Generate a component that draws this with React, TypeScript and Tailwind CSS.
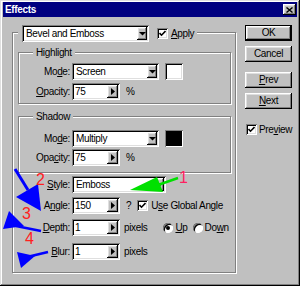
import type { ReactNode } from "react";

const sunken =
  "bg-white shadow-[inset_1px_1px_0_#808080,inset_-1px_-1px_0_#fff,inset_2px_2px_0_#000,inset_-2px_-2px_0_#dfdfdf]";
const raised =
  "bg-[#c0c0c0] shadow-[inset_-1px_-1px_0_#000,inset_1px_1px_0_#fff,inset_-2px_-2px_0_#808080,inset_2px_2px_0_#dfdfdf]";
const etched = "border border-[#808080] shadow-[inset_1px_1px_0_#fff,1px_1px_0_#fff]";

function Combo({ value, width }: { value: string; width: string }) {
  return (
    <div className={`${sunken} ${width} h-[17px] flex items-center`}>
      <span className="flex-1 pl-[4px] leading-none">{value}</span>
      <div className={`${raised} w-[10px] h-[13px] mr-[2px] flex items-center justify-center`}>
        <svg width="7" height="4" viewBox="0 0 7 4">
          <polygon points="0,0 7,0 3.5,3.5" fill="#000" />
        </svg>
      </div>
    </div>
  );
}

function Spin({ value }: { value: string }) {
  return (
    <div className={`${sunken} w-[48px] h-[17px] flex items-center`}>
      <span className="flex-1 pl-[3px] leading-none">{value}</span>
      <div className={`${raised} w-[11px] h-[13px] mr-[2px] flex items-center justify-center`}>
        <svg width="4" height="7" viewBox="0 0 4 7">
          <polygon points="0,0 4,3.5 0,7" fill="#000" />
        </svg>
      </div>
    </div>
  );
}

function Check() {
  return (
    <div className={`${sunken} w-[11px] h-[11px] flex items-center justify-center shrink-0`}>
      <svg width="7" height="7" viewBox="0 0 7 7">
        <path d="M0.5 3 L2.5 5.2 L6.5 1" stroke="#000" strokeWidth="1.6" fill="none" />
      </svg>
    </div>
  );
}

function Radio({ on }: { on?: boolean }) {
  return (
    <div className="w-[10px] h-[10px] rounded-full bg-white shadow-[inset_1px_1px_0_#808080,inset_-1px_-1px_0_#fff,inset_2px_2px_0_#000] flex items-center justify-center">
      {on && <div className="w-[4px] h-[4px] rounded-full bg-black" />}
    </div>
  );
}

function Key({ children }: { children: ReactNode }) {
  return <span className="underline underline-offset-[1px]">{children}</span>;
}

function Button({ children, main, className = "" }: { children: ReactNode; main?: boolean; className?: string }) {
  return (
    <div
      className={`w-[47px] h-[16px] flex items-center justify-center ${main ? "border border-black" : ""} ${className}`}
    >
      <div className={`${raised} w-full h-full flex items-center justify-center leading-none`}>{children}</div>
    </div>
  );
}

export default function App() {
  return (
    <div className="relative w-[300px] h-[286px] bg-[#c0c0c0] px-[3px] pt-[2px] font-['Liberation_Sans',Arial,sans-serif] text-[10px] tracking-[-0.35px] text-black shadow-[inset_-1px_-1px_0_#000,inset_1px_1px_0_#dfdfdf,inset_-2px_-2px_0_#808080,inset_2px_2px_0_#fff] overflow-hidden">
      <div className="h-[15px] bg-[#000080] flex items-center justify-between pl-[2px] pr-[1px]">
        <span className="text-white font-bold leading-none">Effects</span>
        <div className={`${raised} w-[13px] h-[11px] flex items-center justify-center`}>
          <svg width="7" height="6" viewBox="0 0 7 6">
            <path d="M0.5 0.5 L6.5 5.5 M6.5 0.5 L0.5 5.5" stroke="#000" strokeWidth="1.4" />
          </svg>
        </div>
      </div>

      <div className="flex pl-[9px]">
        <div className={`${etched} mt-[15px] w-[224px] h-[241px] flex flex-col`}>
          <div className="-mt-[8px] ml-[5px] self-start bg-[#c0c0c0] pl-[4px] pr-[3px] flex items-center">
            <Combo value="Bevel and Emboss" width="w-[127px]" />
            <div className="ml-[8px]">
              <Check />
            </div>
            <span className="ml-[3px]">
              <Key>A</Key>pply
            </span>
          </div>

          <div className={`${etched} mt-[10px] ml-[5px] w-[213px] h-[52px] flex flex-col`}>
            <div className="-mt-[6px] ml-[14px] self-start bg-[#c0c0c0] px-[3px] leading-[11px]">Highlight</div>
            <div className="mt-[5px] flex items-center">
              <span className="w-[53px] text-right pr-[2px]">
                Mo<Key>d</Key>e:
              </span>
              <Combo value="Screen" width="w-[87px]" />
              <div className={`${sunken} ml-[6px] w-[18px] h-[17px]`} />
            </div>
            <div className="mt-[3px] flex items-center">
              <span className="w-[53px] text-right pr-[2px]">
                <Key>O</Key>pacity:
              </span>
              <Spin value="75" />
              <span className="ml-[6px]">%</span>
            </div>
          </div>

          <div className={`${etched} mt-[12px] ml-[5px] w-[213px] h-[57px] flex flex-col`}>
            <div className="-mt-[6px] ml-[14px] self-start bg-[#c0c0c0] px-[3px] leading-[11px]">Shadow</div>
            <div className="mt-[8px] flex items-center">
              <span className="w-[53px] text-right pr-[2px]">
                Mo<Key>d</Key>e:
              </span>
              <Combo value="Multiply" width="w-[87px]" />
              <div className="ml-[6px] w-[18px] h-[17px] bg-black shadow-[inset_1px_1px_0_#808080,inset_-1px_-1px_0_#fff]" />
            </div>
            <div className="mt-[2px] flex items-center">
              <span className="w-[53px] text-right pr-[2px]">
                Opa<Key>c</Key>ity:
              </span>
              <Spin value="75" />
              <span className="ml-[6px]">%</span>
            </div>
          </div>

          <div className="mt-[3px] flex items-center">
            <span className="w-[59px] text-right pr-[2px]">
              <Key>S</Key>tyle:
            </span>
            <Combo value="Emboss" width="w-[94px]" />
          </div>
          <div className="mt-[4px] flex items-center">
            <span className="w-[59px] text-right pr-[2px]">
              A<Key>n</Key>gle:
            </span>
            <Spin value="150" />
            <span className="ml-[6px]">?</span>
            <div className="ml-[6px]">
              <Check />
            </div>
            <span className="ml-[3px]">
              U<Key>s</Key>e Global Angle
            </span>
          </div>
          <div className="mt-[5px] flex items-center">
            <span className="w-[59px] text-right pr-[2px]">
              <Key>D</Key>epth:
            </span>
            <Spin value="1" />
            <span className="ml-[4px]">pixels</span>
            <div className="ml-[16px]">
              <Radio on />
            </div>
            <span className="ml-[2px]">
              <Key>U</Key>p
            </span>
            <div className="ml-[5px]">
              <Radio />
            </div>
            <span className="ml-[2px]">
              Do<Key>w</Key>n
            </span>
          </div>
          <div className="mt-[7px] flex items-center">
            <span className="w-[59px] text-right pr-[2px]">
              <Key>B</Key>lur:
            </span>
            <Spin value="1" />
            <span className="ml-[4px]">pixels</span>
          </div>
        </div>

        <div className="ml-[9px] mt-[8px] flex flex-col">
          <Button main>OK</Button>
          <Button className="mt-[5px]">Cancel</Button>
          <Button className="mt-[10px]">
            <Key>P</Key>rev
          </Button>
          <Button className="mt-[5px]">
            <Key>N</Key>ext
          </Button>
          <div className="mt-[13px] ml-[1px] flex items-center">
            <Check />
            <span className="ml-[2px]">
              Pre<Key>v</Key>iew
            </span>
          </div>
        </div>
      </div>

      <svg className="absolute left-0 top-0 pointer-events-none" width="300" height="286" viewBox="0 0 300 286">
        <line x1="15" y1="169" x2="28" y2="190" stroke="#0000ff" strokeWidth="3" />
        <polygon points="41,211 38,184 16,197" fill="#0000ff" />
        <polygon points="9,211 3,229 24,226" fill="#0000ff" />
        <line x1="16" y1="226" x2="41" y2="231" stroke="#0000ff" strokeWidth="2.5" />
        <polygon points="17,252 21,268 35,256" fill="#0000ff" />
        <line x1="27" y1="257" x2="48" y2="252" stroke="#0000ff" strokeWidth="2.5" />
        <polygon points="130,190 157,177 163,192" fill="#00e000" />
        <line x1="158" y1="185" x2="178" y2="178" stroke="#00e000" strokeWidth="2.5" />
      </svg>
      <span className="absolute left-[179px] top-[170px] text-[16px] leading-none text-[#ff2060] tracking-normal">1</span>
      <span className="absolute left-[36px] top-[172px] text-[16px] leading-none text-[#ff2020] tracking-normal">2</span>
      <span className="absolute left-[22px] top-[206px] text-[16px] leading-none text-[#ff2020] tracking-normal">3</span>
      <span className="absolute left-[25px] top-[231px] text-[16px] leading-none text-[#ff2020] tracking-normal">4</span>
    </div>
  );
}
